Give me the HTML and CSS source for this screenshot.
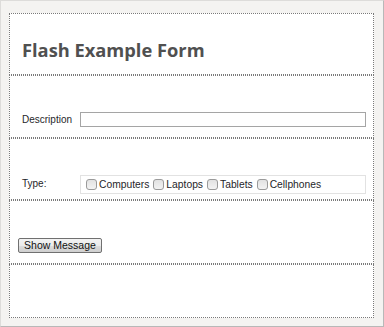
FILE: index.html
```html
<!DOCTYPE html>
<html>
<head>
<meta charset="utf-8">
<link rel="stylesheet" href="styles.css">
</head>
<body>
<div class="frame">
  <form class="panel">
    <div class="row row-title"><h1 class="title">Flash Example Form</h1></div>
    <div class="row row-desc">
      <label class="label">Description</label>
      <input class="text-input" type="text">
    </div>
    <div class="row row-type">
      <span class="label">Type:</span>
      <div class="choices">
        <label class="choice"><input class="check" type="checkbox"><span>Computers</span></label>
        <label class="choice"><input class="check" type="checkbox"><span>Laptops</span></label>
        <label class="choice"><input class="check" type="checkbox"><span>Tablets</span></label>
        <label class="choice"><input class="check" type="checkbox"><span>Cellphones</span></label>
      </div>
    </div>
    <div class="row row-btn">
      <button class="btn" type="button">Show Message</button>
    </div>
    <div class="row row-msg"></div>
  </form>
</div>
</body>
</html>
```
FILE: styles.css
```css
* { box-sizing: border-box; }
html, body { margin: 0; padding: 0; }
body { font-family: "Liberation Sans", Arial, sans-serif; }
.frame {
  width: 384px;
  height: 327px;
  background: #f4f3f1;
  border: 1px solid;
  border-color: #dddcda #b8b8b8 #b8b8b8 #dddcda;
  padding: 12px 9px 8px 8px;
}
.panel {
  margin: 0;
  display: flex;
  flex-direction: column;
  background: #fff;
  width: 365px;
}
.row {
  border: 1px dotted #7a7a7a;
  padding-left: 12px;
  display: flex;
  align-items: flex-start;
}
.row-title { height: 62px; padding-top: 25px; }
.row-desc { height: 63px; padding-top: 36px; }
.row-type { height: 62px; padding-top: 36px; }
.row-btn { height: 64px; padding-top: 37px; padding-left: 8px; }
.row-msg { height: 54px; }
.title {
  margin: 0;
  font-family: "Open Sans", sans-serif;
  font-weight: 700;
  font-size: 18.3px;
  line-height: 22px;
  color: #505050;
}
.label {
  width: 58px;
  font-size: 10px;
  color: #1f1f2a;
  line-height: 15px;
}
.row-type .label { line-height: 17px; }
.text-input {
  width: 286px;
  height: 15px;
  margin: 0;
  padding: 0 2px;
  border: 1px solid #a5a5a5;
  font-size: 10px;
  background: #fff;
  outline: none;
}
.choices {
  width: 286px;
  height: 19px;
  border: 1px solid #e2e2e2;
  display: flex;
  align-items: center;
  padding-left: 5px;
}
.choice {
  display: flex;
  align-items: center;
  font-size: 10.3px;
  color: #1f1f2a;
  margin-right: 4px;
}
.check {
  -webkit-appearance: none;
  appearance: none;
  width: 11px;
  height: 11px;
  margin: 0 2px 1px 0;
  border: 1px solid #9a9a9a;
  border-radius: 3px;
  background: linear-gradient(#e2e2e2, #f3f3f3);
}
.btn {
  width: 84px;
  height: 15px;
  margin: 0;
  padding: 0;
  font-family: "Liberation Sans", Arial, sans-serif;
  font-size: 10.5px;
  line-height: 13px;
  color: #111;
  border: 1px solid #707070;
  border-radius: 2px;
  background: linear-gradient(#f3f3f3 0%, #ebebeb 50%, #dddddd 51%, #cfcfcf 100%);
}
```
